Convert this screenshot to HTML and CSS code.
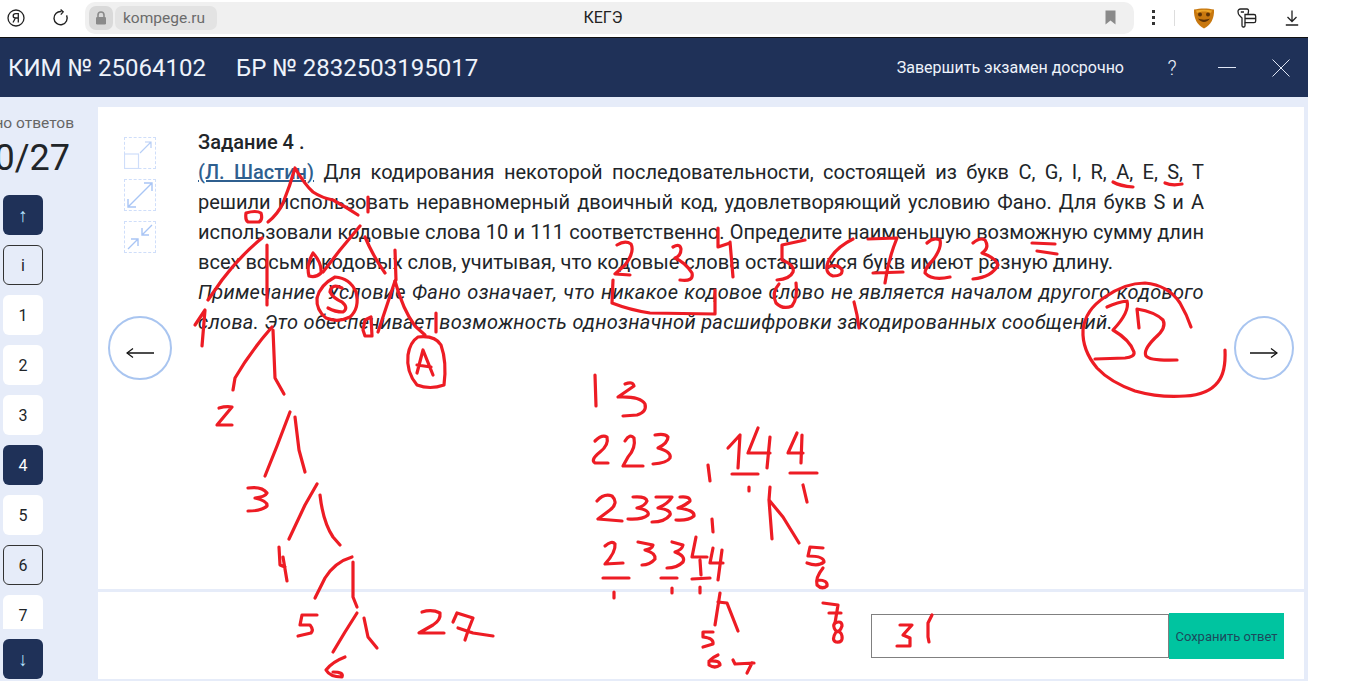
FILE: index.html
```html
<!DOCTYPE html>
<html lang="ru">
<head>
    <meta charset="UTF-8">
    <title>КЕГЭ</title>
    <link rel="stylesheet" href="styles.css">
</head>
<body>

    <div class="browser">
        <svg class="ya-icon" width="20" height="20" viewBox="0 0 20 20" fill="none" stroke="#222" stroke-width="1.3">
            <circle cx="10" cy="10" r="8"/>
            <path d="M12.3 14.5V5.7H9.6C8 5.7 7.2 6.6 7.2 7.9 7.2 9.2 8 10 9.6 10H12.3M9.4 10L7 14.5"/>
        </svg>
        <svg class="reload" width="18" height="18" viewBox="0 0 18 18" fill="none" stroke="#222" stroke-width="1.4">
            <path d="M14.6 6.4A6.6 6.6 0 1 1 9.5 2.6"/>
            <path d="M8.6 0.6L11.2 2.9 8.8 5.6" stroke-width="1.3"/>
        </svg>
        <div class="address">
            <div class="lock-chip">
                <svg width="12" height="14" viewBox="0 0 12 14">
                    <path d="M3 6V4a3 3 0 0 1 6 0v2" fill="none" stroke="#8a8a8a" stroke-width="1.6"/>
                    <rect x="1" y="6" width="10" height="7.5" rx="1.2" fill="#8a8a8a"/>
                </svg>
            </div>
            <div class="url-chip">kompege.ru</div>
            <div class="page-title">КЕГЭ</div>
            <svg class="bookmark" width="11" height="15" viewBox="0 0 11 15"><path d="M0.5 0.5H10.5V14.5L5.5 10.5 0.5 14.5Z" fill="#8a8a8a"/></svg>
        </div>
        <div class="menu-dots"><i></i><i></i><i></i></div>
        <div class="separator"></div>
        <svg class="mask" width="22" height="22" viewBox="0 0 22 22">
            <path d="M1 2.5C7 1 15 1 21 2.5 21.5 11 18 18 11 21.5 4 18 0.5 11 1 2.5Z" fill="#c8780f"/>
            <circle cx="7" cy="7.5" r="2" fill="#5d3206"/>
            <circle cx="15" cy="7.5" r="2" fill="#5d3206"/>
            <path d="M5 11.5C8 16 14 16 17 11.5 14 13 8 13 5 11.5Z" fill="#5d3206"/>
            <path d="M3 3.5C8 2.5 14 2.5 19 3.5L18 6C14 4 8 4 4 6Z" fill="#eda62a"/>
        </svg>
        <svg class="tabs-icon" width="20" height="20" viewBox="0 0 20 20" fill="none" stroke="#222" stroke-width="1.3">
            <path d="M8 14.5V17.5C8 18.5 7.5 19 7 19H6C5.5 19 5 18.5 5 17.5V10L2.5 7.5C1.5 6.5 1 5 1 3.5 1 2 2 1 3.5 1H10C11 1 11.7 2 11.5 3.5L11 6"/>
            <path d="M8 6.5H17C18 6.5 18.7 7.2 18.7 8.2V13C18.7 14 18 14.7 17 14.7H8ZM8 10.5H18.5M3.8 4H7"/>
        </svg>
        <svg class="download" width="14" height="16" viewBox="0 0 14 16" fill="none" stroke="#222" stroke-width="1.3">
            <path d="M7 0.5V11M2.5 7L7 11.5 11.5 7M0.8 15H13.2"/>
        </svg>
    </div>

    <div class="app">
        <header class="topbar">
            <div class="kim">КИМ № 25064102</div>
            <div class="br">БР № 2832503195017</div>
            <div class="finish">Завершить экзамен досрочно</div>
            <div class="help">?</div>
            <div class="minimize"></div>
            <svg class="close" width="18" height="18" viewBox="0 0 18 18" stroke="#dfe6f5" stroke-width="1"><path d="M0.5 0.5L17.5 17.5M17.5 0.5L0.5 17.5"/></svg>
        </header>

        <div class="content">
            <aside class="sidebar">
                <div class="answers-label"><span>Дано ответов</span></div>
                <div class="answers-count"><span>10/27</span></div>
                <div class="nav-btn dark arrow">↑</div>
                <div class="nav-list">
                    <div class="nav-btn outlined">i</div>
                    <div class="nav-btn">1</div>
                    <div class="nav-btn">2</div>
                    <div class="nav-btn">3</div>
                    <div class="nav-btn dark">4</div>
                    <div class="nav-btn">5</div>
                    <div class="nav-btn outlined">6</div>
                    <div class="nav-btn">7</div>
                </div>
                <div class="nav-btn dark arrow">↓</div>
            </aside>

            <main class="main">
                <section class="task">
                    <div class="tools">
                        <div class="tool">
                            <svg width="32" height="32" viewBox="0 0 32 32" fill="none" stroke="#b7cef6" stroke-width="1.2">
                                <rect x="0.5" y="17" width="14" height="14.5" stroke="#cfdefa"/>
                                <path d="M16 16L27 5M21 5H27V11"/>
                            </svg>
                        </div>
                        <div class="tool">
                            <svg width="32" height="32" viewBox="0 0 32 32" fill="none" stroke="#a9c5f5" stroke-width="1.4">
                                <path d="M4 28L28 4M20 4H28V12M4 20V28H12"/>
                            </svg>
                        </div>
                        <div class="tool">
                            <svg width="32" height="32" viewBox="0 0 32 32" fill="none" stroke="#a9c5f5" stroke-width="1.4">
                                <path d="M4 28L14 18M7 18H14V25M28 4L18 14M25 14H18V7"/>
                            </svg>
                        </div>
                    </div>
                    <div class="round-btn left">
                        <svg width="28" height="12" viewBox="0 0 28 12" fill="none" stroke="#111" stroke-width="1.5"><path d="M1 6H28"/><path d="M7 1.5L1 6 7 10.5" stroke-width="1.2"/></svg>
                    </div>
                    <div class="task-text">
                        <div class="task-head">Задание 4 .</div>
                        <p><a class="author" href="#">(Л. Шастин)</a> Для кодирования некоторой последовательности, состоящей из букв C, G, I, R, A, E, S, T решили использовать неравномерный двоичный код, удовлетворяющий условию Фано. Для букв S и A использовали кодовые слова 10 и 111 соответственно. Определите наименьшую возможную сумму длин всех восьми кодовых слов, учитывая, что кодовые слова оставшихся букв имеют разную длину.</p>
                        <p class="note">Примечание. Условие Фано означает, что никакое кодовое слово не является началом другого кодового слова. Это обеспечивает возможность однозначной расшифровки закодированных сообщений.</p>
                    </div>
                    <div class="round-btn right">
                        <svg width="28" height="12" viewBox="0 0 28 12" fill="none" stroke="#111" stroke-width="1.5"><path d="M0 6H27"/><path d="M21 1.5L27 6 21 10.5" stroke-width="1.2"/></svg>
                    </div>
                </section>
                <section class="answer">
                    <div class="answer-input"></div>
                    <button class="save-btn">Сохранить ответ</button>
                </section>
            </main>
        </div>
    </div>

    <!-- красные пометки поверх страницы -->
    <svg class="scribbles" width="1347" height="681" viewBox="0 0 1347 681" fill="none" stroke="#ed1c24" stroke-width="3.2" stroke-linecap="round" stroke-linejoin="round">
        <!-- дерево сверху -->
        <path d="M268 222Q278 214 283 203Q290 186 295 168Q305 185 313 192Q322 198 333 200Q346 207 358 215"/>
        <path d="M368 197V212"/>
        <path d="M246 213Q256 210 261 213Q263 220 259 222L248 222Q245 220 246 213Z"/>
        <path d="M262 238Q240 256 222 280L208 300"/>
        <path d="M267 245V305"/>
        <path d="M195 325L205 310 202 346"/>
        <path d="M313 253Q322 263 321 273Q316 278 309 276Q306 265 313 253Z"/>
        <path d="M360 226L340 250 323 272"/>
        <path d="M365 237Q374 258 385 273"/>
        <path d="M395 250L396 280"/>
        <path d="M395 281L378 332"/>
        <path d="M395 281Q403 310 415 326L425 335"/>
        <path d="M436 313V332"/>
        <path d="M365 320L371 317 372 336 365 336 363 330Z"/>
        <path d="M335 277Q350 278 356 292Q360 308 350 317Q338 323 326 318Q316 310 317 298Q320 285 335 277Z"/>
        <path d="M342 288Q331 283 330 292Q333 298 342 302Q349 308 343 312Q335 312 328 308"/>
        <path d="M418 337Q435 335 441 345Q447 362 444 385Q430 390 417 385Q406 372 408 355Q410 342 418 337Z"/>
        <path d="M417 373L423 350 433 375M417 365L431 367"/>
        <!-- левая ветка -->
        <path d="M272 327Q250 352 235 378L233 390"/>
        <path d="M273 330L275 378 284 394"/>
        <path d="M219 408Q226 406 232 407L217 425H232"/>
        <path d="M290 412L277 446 265 476"/>
        <path d="M295 417L299 450 305 472"/>
        <path d="M248 488Q262 486 267 493Q265 497 255 498Q268 501 267 506Q262 511 248 511"/>
        <path d="M317 484L305 505 289 539"/>
        <path d="M320 495Q323 522 333 537L340 545"/>
        <path d="M279 547L280 565 285 567M283 557L287 581"/>
        <path d="M352 557Q335 562 325 578L315 598"/>
        <path d="M353 562V597L357 607"/>
        <path d="M317 615H302L300 625 310 625Q314 630 311 633L298 636"/>
        <path d="M357 613L345 632 333 652"/>
        <path d="M364 618L368 637 377 648"/>
        <path d="M345 657Q332 662 326 670Q330 677 342 677Q344 672 333 672"/>
        <path d="M422 612Q432 609 440 613Q441 620 433 625L419 633H444"/>
        <path d="M453 622L457 613 473 618Q468 630 465 640M458 628L473 633 493 636"/>
        <!-- пометки в тексте -->
        <path d="M1113 182Q1120 186 1133 187"/>
        <path d="M1165 183Q1172 186 1182 184"/>
        <path d="M1032 243L1055 244"/>
        <path d="M1037 251L1057 254"/>
        <path d="M617 245Q625 240 631 244Q635 252 625 265L615 274 630 275"/>
        <path d="M673 247Q680 243 681 249Q681 256 675 258Q686 263 692 273Q694 282 680 280"/>
        <path d="M718 228V247L730 243M730 242L733 277"/>
        <path d="M805 240L782 245V260Q795 265 793 272Q790 279 777 280"/>
        <path d="M853 239Q835 248 828 262Q824 273 833 276Q843 276 842 270Q838 263 828 267"/>
        <path d="M868 239L897 238Q888 260 885 283M873 273L903 272"/>
        <path d="M927 243Q933 237 940 240Q942 248 933 260Q925 268 925 273Q932 281 950 277"/>
        <path d="M973 243Q980 237 985 240Q990 248 982 253Q996 258 998 265Q992 277 973 279"/>
        <path d="M613 280L612 303Q630 310 650 313L715 314V290"/>
        <path d="M779 284Q771 293 776 303Q783 310 792 306Q798 298 796 283"/>
        <path d="M854 302L857 315 859 328"/>
        <!-- 32 в круге -->
        <path d="M1225 350Q1226 372 1218 382Q1208 395 1185 396Q1160 398 1135 391Q1110 382 1097 368Q1082 350 1083 330Q1085 310 1105 297Q1125 283 1145 283Q1168 285 1180 303Q1187 315 1191 327"/>
        <path d="M1107 307Q1118 302 1127 301Q1130 312 1113 330Q1130 340 1134 352Q1135 357 1125 358L1095 359"/>
        <path d="M1139 328L1137 309Q1155 312 1163 320Q1167 328 1155 338Q1143 350 1146 356Q1150 361 1177 360"/>
        <!-- расчёт в центре -->
        <path d="M595 375L596 406"/>
        <path d="M625 384Q633 381 634 386L618 397Q640 396 645 404Q647 412 637 415L623 416"/>
        <path d="M595 441Q602 434 607 437Q609 445 600 452Q590 460 595 463L608 463"/>
        <path d="M625 441Q630 433 634 438Q636 448 628 457L623 466H643"/>
        <path d="M655 435Q665 433 668 437Q668 443 658 448Q672 452 670 458Q667 463 653 464"/>
        <path d="M708 465L710 481"/>
        <path d="M728 448L740 435 738 468"/>
        <path d="M758 428L748 453H770M770 437L767 468"/>
        <path d="M797 433L788 453H803M802 435L801 463"/>
        <path d="M732 474H758M790 473H817"/>
        <path d="M749 487V491M803 485L807 502"/>
        <path d="M770 487L769 500 772 539M769 500L783 517 799 543"/>
        <path d="M823 548L810 547 808 556Q824 556 824 562Q818 567 807 563"/>
        <path d="M823 568Q815 578 817 585Q822 590 827 586Q828 580 818 580"/>
        <path d="M823 603L838 605 835 623M829 613H841"/>
        <path d="M835 623Q842 620 842 626Q840 632 836 632Q831 640 836 642Q843 643 842 636Q841 631 836 631Q832 626 835 623Z"/>
        <path d="M597 501Q604 493 612 496Q619 503 610 510L598 519 622 521"/>
        <path d="M633 497Q646 496 647 501Q645 506 637 508Q650 510 648 515Q642 520 628 519"/>
        <path d="M656 497H672Q668 504 658 508Q672 510 670 515Q665 522 652 522"/>
        <path d="M680 497Q690 496 690 501Q686 505 678 508Q695 510 694 516Q688 521 676 520"/>
        <path d="M712 519L713 532"/>
        <path d="M605 546Q612 540 615 544Q616 552 605 564L623 563"/>
        <path d="M638 542L653 545Q652 549 645 550Q656 553 655 559Q650 565 642 565"/>
        <path d="M672 542L683 545Q682 550 675 552Q686 556 683 562Q677 568 667 568"/>
        <path d="M696 537L692 557H707M700 560L701 575"/>
        <path d="M713 548L710 563H723M722 550L718 580"/>
        <path d="M603 578H629M661 578H677M692 579L710 578"/>
        <path d="M614 592V598M672 588V593M700 587V593"/>
        <path d="M720 593L715 625M718 602L727 603 738 631"/>
        <path d="M713 632H703V637Q714 638 713 644L703 647"/>
        <path d="M718 655Q707 660 709 665Q715 669 720 665Q720 660 709 661"/>
        <path d="M733 660L735 664 754 663M752 663L747 673"/>
        <!-- поле ответа -->
        <path d="M900 625H912L903 635 910 638V646H897"/>
        <path d="M932 615L928 623V637L929 642"/>
    </svg>

</body>
</html>
```

FILE: styles.css
```css
* {
    box-sizing: border-box;
}
html, body {
    margin: 0;
    height: 681px;
    overflow: hidden;
    background-color: white;
}
body {
    font-family: Roboto, "Liberation Sans", sans-serif;
    color: #212529;
}

/* browser toolbar */
.browser {
    height: 37px;
    display: flex;
    align-items: center;
    padding-bottom: 2px;
    background-color: white;
}
.ya-icon {
    margin-left: 6px;
}
.reload {
    margin-left: 26px;
}
.address {
    width: 1049px;
    height: 32px;
    margin-left: 15px;
    padding: 0 18px 0 4px;
    display: flex;
    align-items: center;
    background-color: #f0f0f0;
    border-radius: 10px;
}
.lock-chip {
    width: 24px;
    height: 24px;
    display: flex;
    align-items: center;
    justify-content: center;
    background-color: #d9d9d9;
    border-radius: 7px;
}
.url-chip {
    width: 102px;
    height: 24px;
    margin-left: 2px;
    padding-left: 8px;
    font-size: 15.5px;
    line-height: 24px;
    color: #6b6b6b;
    background-color: #e3e3e3;
    border-radius: 7px;
}
.page-title {
    flex: 1;
    padding-right: 116px;
    font-size: 16px;
    text-align: center;
    color: #222;
}
.menu-dots {
    width: 3px;
    margin-left: 18px;
    display: flex;
    flex-direction: column;
    gap: 3px;
}
.menu-dots i {
    width: 3px;
    height: 3px;
    background-color: #333;
}
.separator {
    width: 1px;
    height: 16px;
    margin-left: 19px;
    background-color: #ddd;
}
.mask {
    margin-left: 18px;
}
.tabs-icon {
    margin-left: 22px;
}
.download {
    margin-left: 28px;
}

/* exam page */
.app {
    width: 1308px;
    height: 644px;
    background-color: #e6ecf9;
    border-top: 1px solid #111;
}
.topbar {
    height: 59px;
    display: flex;
    align-items: center;
    padding-left: 8px;
    color: #eef3fb;
    background-color: #1f3158;
}
.kim, .br {
    font-size: 24px;
}
.br {
    margin-left: 30px;
}
.finish {
    margin-left: auto;
    font-size: 16px;
}
.help {
    width: 14px;
    margin-left: 41px;
    font-size: 20px;
    font-weight: 300;
    text-align: center;
}
.minimize {
    width: 18px;
    height: 1px;
    margin-left: 39px;
    background-color: #dfe6f5;
}
.close {
    margin: 0 18px 0 36px;
}

.content {
    height: 584px;
    display: flex;
}

/* left column */
.sidebar {
    width: 98px;
    padding-left: 3px;
    overflow: hidden;
}
.answers-label, .answers-count {
    display: flex;
    justify-content: flex-end;
    white-space: nowrap;
}
.answers-label {
    width: 71px;
    margin-top: 16px;
    font-size: 15.5px;
    line-height: 20px;
    color: #666;
}
.answers-count {
    width: 67px;
    margin-top: 4px;
    margin-bottom: 16px;
    font-size: 36px;
    line-height: 42px;
}
.nav-btn {
    width: 40px;
    height: 40px;
    flex: none;
    display: flex;
    align-items: center;
    justify-content: center;
    font-size: 16px;
    background-color: white;
    border-radius: 6px;
}
.nav-btn.dark {
    color: white;
    background-color: #1f3158;
}
.nav-btn.arrow {
    font-size: 19px;
    color: #b5e3ff;
}
.nav-btn.outlined {
    background-color: #e6ecf9;
    border: 1px solid #333;
}
.nav-list {
    height: 384px;
    margin: 10px 0;
    display: flex;
    flex-direction: column;
    gap: 10px;
    overflow: hidden;
}

/* task */
.main {
    width: 1206px;
    margin-top: 10px;
}
.task {
    position: relative;
    height: 482px;
    background-color: white;
}
.tools {
    position: absolute;
    left: 26px;
    top: 30px;
    display: flex;
    flex-direction: column;
    gap: 10px;
}
.tool {
    width: 32px;
    height: 32px;
    border: 1px dashed #cfdefa;
}
.tool svg {
    display: block;
    margin: -1px;
}
.task-text {
    width: 1006px;
    margin-left: 100px;
    padding-top: 20px;
    font-size: 20px;
    line-height: 30px;
}
.task-head {
    font-weight: 500;
}
.task-text p {
    margin: 0;
    text-align: justify;
}
.task-text .note {
    font-style: italic;
    letter-spacing: 0.32px;
}
.author {
    font-weight: 500;
    color: #2f5f8f;
}
.round-btn {
    position: absolute;
    top: 209px;
    height: 64px;
    padding-top: 9px;
    display: flex;
    align-items: center;
    justify-content: center;
    background-color: white;
    border: 2px solid #a9c5f0;
    border-radius: 50%;
}
.round-btn.left {
    left: 10px;
    width: 64px;
}
.round-btn.right {
    left: 1136px;
    width: 60px;
}

/* answer */
.answer {
    height: 87px;
    margin-top: 3px;
    padding: 21px 20px 0 773px;
    display: flex;
    align-items: flex-start;
    background-color: white;
}
.answer-input {
    width: 298px;
    height: 44px;
    margin-top: 1px;
    background-color: white;
    border: 1px solid #808080;
}
.save-btn {
    width: 115px;
    height: 46px;
    padding: 0;
    font-family: Roboto, sans-serif;
    font-size: 13px;
    color: #1d4a5c;
    background-color: #00c4a0;
    border: none;
}

/* annotations drawn on top of the page */
.scribbles {
    position: absolute;
    left: 0;
    top: 0;
    pointer-events: none;
}
```
